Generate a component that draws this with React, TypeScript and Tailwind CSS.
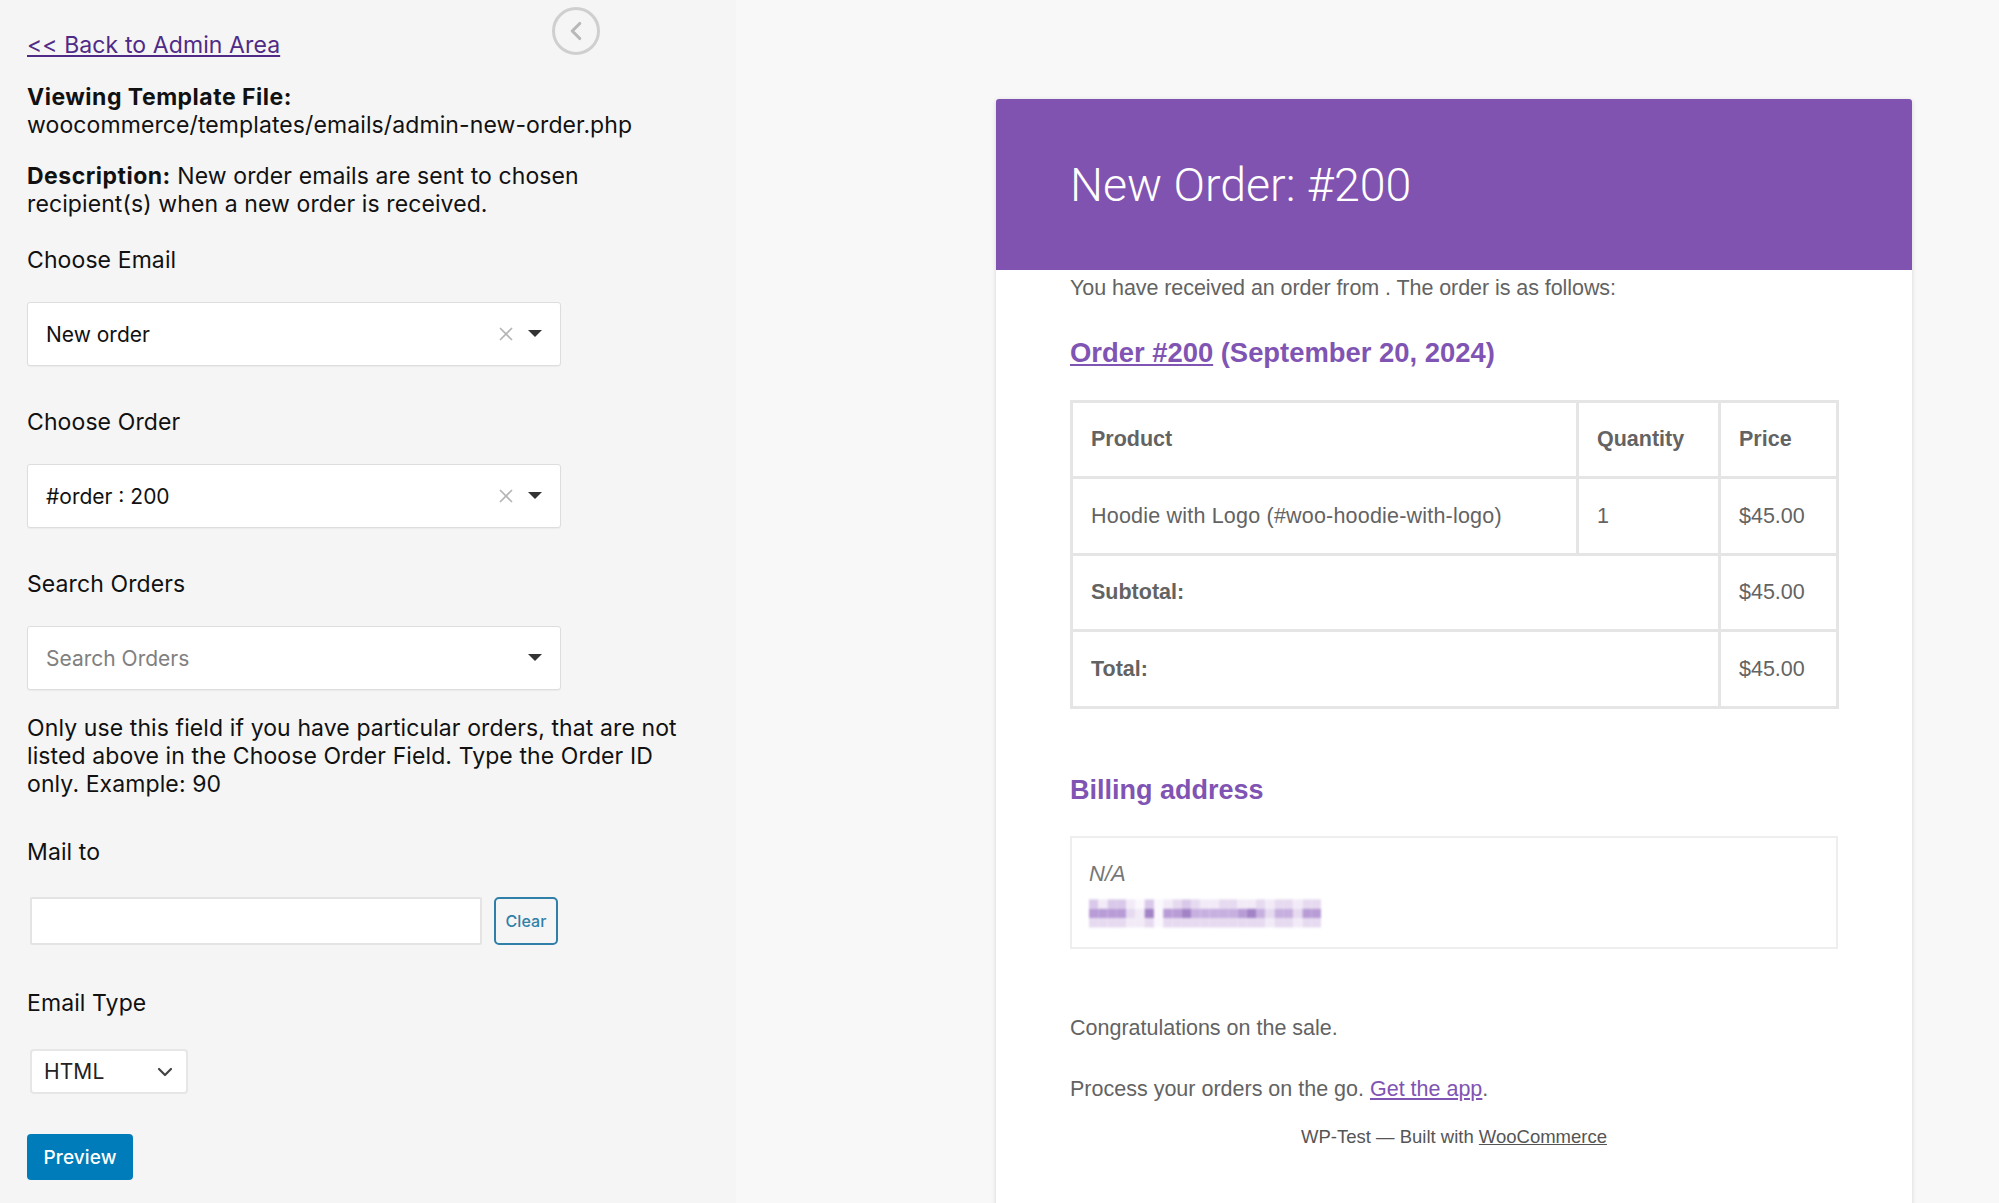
import { ChevronDown, ChevronLeft, X } from "lucide-react";

const leftFont = { fontFamily: "Inter, sans-serif" };

const Mosaic = () => {
  // blurred-out address, one row of tints per band
  const top = [3, 1, 3, 3, 1, 0, 3, 0, 1, 2, 3, 2, 1, 1, 2, 2, 1, 1, 2, 1, 2, 2, 1, 2, 2];
  const mid = [5, 5, 5, 5, 2, 1, 6, 0, 5, 5, 6, 4, 4, 4, 4, 4, 5, 6, 4, 2, 4, 4, 2, 5, 5];
  const low = [2, 2, 2, 2, 1, 1, 2, 0, 2, 2, 2, 2, 2, 2, 2, 2, 2, 2, 2, 1, 2, 2, 1, 2, 2];
  const tints = ["#fbf8fd", "#f2ebf7", "#e6daf0", "#d9c8e9", "#c7b0e0", "#b89cd6", "#a183c6"];
  return (
    <svg width="232" height="29" viewBox="0 0 230 28" className="block blur-[0.8px]">
      {[top, mid, low].map((row, y) =>
        row.map((t, x) => <rect key={`${x}-${y}`} x={x * 9.2} y={y * 9.3} width="9.2" height="9.3" fill={tints[t]} />)
      )}
    </svg>
  );
};

const FieldSelect = ({ value, placeholder, clearable }: { value: string; placeholder?: boolean; clearable?: boolean }) => (
  <div className="h-[64px] w-[534px] flex items-center pl-[18px] pr-[18px] bg-white border border-[#dddddd] rounded-[3px] shadow-[0_1px_1px_rgba(0,0,0,0.04)]">
    <span className={`flex-1 pt-[1px] text-[21px] leading-[28px] tracking-normal ${placeholder ? "text-[#808080]" : "text-[#111111]"}`}>{value}</span>
    {clearable && <X className="w-[22px] h-[22px] mr-[11px] text-[#b5b5b5]" strokeWidth={1.9} />}
    <span className="w-0 h-0 border-x-[7px] border-x-transparent border-t-[7px] border-t-[#333333] -mt-[2px]"></span>
  </div>
);

const Label = ({ children, className }: { children: string; className: string }) => (
  <div className={`text-[23px] leading-[28px] tracking-[0.1px] text-[#111111] ${className}`}>{children}</div>
);

export default function App() {
  return (
    <div className="flex h-[1203px] w-[1999px] overflow-hidden bg-[#f8f8f8]">
      {/* Sidebar */}
      <aside className="relative w-[736px] shrink-0 bg-[#f5f5f5] pl-[27px] pt-[31px] text-[23px] leading-[28px] tracking-[0.1px] text-[#111111]" style={leftFont}>
        <button className="absolute left-[552px] top-[7px] w-[48px] h-[48px] rounded-full border-[3px] border-[#cfcfcf] flex items-center justify-center">
          <ChevronLeft className="w-[30px] h-[30px] text-[#b8b8b8]" strokeWidth={2.5} />
        </button>

        <a href="#" className="block w-fit underline text-[#4f2a86]">&lt;&lt; Back to Admin Area</a>

        <p className="mt-[24px]">
          <b className="font-bold tracking-[0.5px]">Viewing Template File:</b>
          <br />
          woocommerce/templates/emails/admin-new-order.php
        </p>
        <p className="mt-[23px] w-[640px]">
          <b className="font-bold tracking-[0.5px]">Description:</b> New order emails are sent to chosen recipient(s) when a new order is received.
        </p>

        <Label className="mt-[28px] mb-[28px]">Choose Email</Label>
        <FieldSelect value="New order" clearable />

        <Label className="mt-[42px] mb-[28px]">Choose Order</Label>
        <FieldSelect value="#order : 200" clearable />

        <Label className="mt-[42px] mb-[28px]">Search Orders</Label>
        <FieldSelect value="Search Orders" placeholder />

        <p className="mt-[24px] w-[660px]">
          Only use this field if you have particular orders, that are not listed above in the Choose Order Field. Type the Order ID only. Example: 90
        </p>

        <Label className="mt-[40px] mb-[31px]">Mail to</Label>
        <div className="flex items-center ml-[3px] gap-[12px]">
          <input className="w-[452px] h-[48px] bg-white border-2 border-[#e4e4e4] rounded-[2px]" />
          <button className="w-[64px] h-[48px] border-2 border-[#2f7fa8] rounded-[5px] text-[16px] font-medium text-[#2f7fa8]">Clear</button>
        </div>

        <Label className="mt-[44px] mb-[32px]">Email Type</Label>
        <div className="ml-[3px] w-[158px] h-[45px] flex items-center justify-between pl-[12px] pr-[9px] bg-white border-2 border-[#e6e6e6] rounded-[4px]">
          <span className="text-[21px] text-[#222222]">HTML</span>
          <ChevronDown className="w-[24px] h-[24px] text-[#444444]" strokeWidth={2.2} />
        </div>

        <button className="mt-[40px] w-[106px] h-[46px] pt-[1px] bg-[#007cba] rounded-[4px] text-[19px] font-medium text-white">Preview</button>
      </aside>

      {/* Email preview */}
      <main className="flex-1 pt-[99px] pl-[260px] pr-[87px]" style={{ fontFamily: '"Liberation Sans", Arial, sans-serif' }}>
        <div className="w-[916px] h-[1200px] bg-white shadow-[0_1px_5px_rgba(0,0,0,0.14)] rounded-t-[3px]">
          <div className="h-[171px] flex items-center px-[74px] pt-[2px] bg-[#8053b0] rounded-t-[3px]">
            <h1 className="text-[46.5px] font-light leading-none text-white" style={{ fontFamily: "Roboto, sans-serif" }}>New Order: #200</h1>
          </div>

          <div className="px-[74px] text-[21.5px] text-[#636363]">
            <p className="mt-[4px] leading-[28px] tracking-[-0.065px]">You have received an order from . The order is as follows:</p>

            <h2 className="mt-[33px] text-[27.4px] leading-[36px] font-bold text-[#7f54b3]">
              <a href="#" className="underline">Order #200</a> (September 20, 2024)
            </h2>

            <table className="mt-[29px] w-[766px] table-fixed border-collapse border-[3px] border-[#e5e5e5]">
              <colgroup>
                <col className="w-[506px]" />
                <col className="w-[142px]" />
                <col className="w-[118px]" />
              </colgroup>
              <tbody>
                <tr className="h-[76px]">
                  <th className="border-[3px] border-[#e5e5e5] pl-[18px] text-left font-bold">Product</th>
                  <th className="border-[3px] border-[#e5e5e5] pl-[18px] text-left font-bold">Quantity</th>
                  <th className="border-[3px] border-[#e5e5e5] pl-[18px] text-left font-bold">Price</th>
                </tr>
                <tr className="h-[77px]">
                  <td className="border-[3px] border-[#e5e5e5] pl-[18px] tracking-[0.2px]">Hoodie with Logo (#woo-hoodie-with-logo)</td>
                  <td className="border-[3px] border-[#e5e5e5] pl-[18px]">1</td>
                  <td className="border-[3px] border-[#e5e5e5] pl-[18px]">$45.00</td>
                </tr>
                <tr className="h-[76px]">
                  <th colSpan={2} className="border-[3px] border-[#e5e5e5] pl-[18px] text-left font-bold">Subtotal:</th>
                  <td className="border-[3px] border-[#e5e5e5] pl-[18px]">$45.00</td>
                </tr>
                <tr className="h-[77px]">
                  <th colSpan={2} className="border-[3px] border-[#e5e5e5] pl-[18px] text-left font-bold">Total:</th>
                  <td className="border-[3px] border-[#e5e5e5] pl-[18px]">$45.00</td>
                </tr>
              </tbody>
            </table>

            <h2 className="mt-[63px] text-[27px] leading-[36px] font-bold text-[#7f54b3]">Billing address</h2>

            <div className="mt-[28px] w-[768px] h-[113px] border-2 border-[#eeeeee] pl-[17px] pt-[22px]">
              <div className="italic text-[22px] leading-[28px] text-[#777777]">N/A</div>
              <div className="mt-[11px]"><Mosaic /></div>
            </div>

            <p className="mt-[65px] leading-[28px]">Congratulations on the sale.</p>
            <p className="mt-[33px] leading-[28px]">
              Process your orders on the go. <a href="#" className="underline text-[#7f54b3]">Get the app</a>.
            </p>
            <p className="mt-[22px] w-[768px] text-center text-[18.5px] leading-[24px] text-[#555555]">
              WP-Test — Built with <a href="#" className="underline">WooCommerce</a>
            </p>
          </div>
        </div>
      </main>
    </div>
  );
}
